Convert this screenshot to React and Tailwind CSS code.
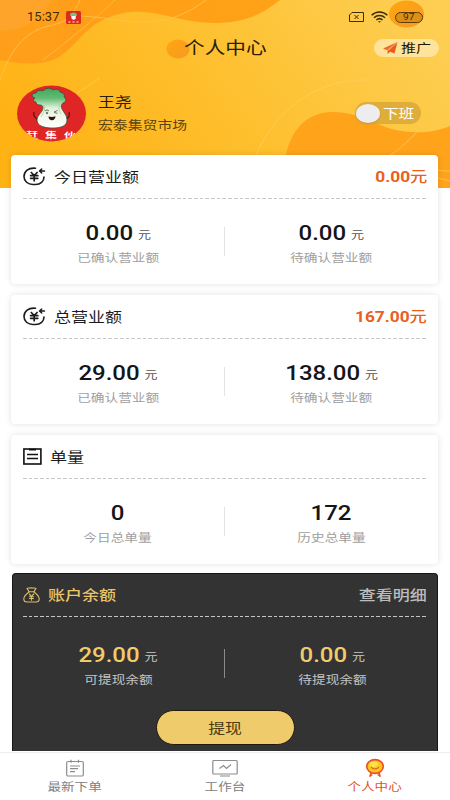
import React, { useState } from 'react';
import clsx from 'clsx';

const stats = [
  {
    title: '今日营业额',
    icon: 'yen',
    total: '0.00元',
    items: [
      { value: '0.00', unit: '元', label: '已确认营业额' },
      { value: '0.00', unit: '元', label: '待确认营业额' },
    ],
  },
  {
    title: '总营业额',
    icon: 'yen',
    total: '167.00元',
    items: [
      { value: '29.00', unit: '元', label: '已确认营业额' },
      { value: '138.00', unit: '元', label: '待确认营业额' },
    ],
  },
  {
    title: '单量',
    icon: 'list',
    items: [
      { value: '0', label: '今日总单量' },
      { value: '172', label: '历史总单量' },
    ],
  },
];

const balance = [
  { value: '29.00', unit: '元', label: '可提现余额' },
  { value: '0.00', unit: '元', label: '待提现余额' },
];

const Wide = ({ className, children }) => (
  <span className={clsx('inline-block whitespace-nowrap scale-x-[1.2]', className)}>{children}</span>
);

const YenIcon = () => (
  <svg width="23" height="19" viewBox="0 0 23 19" fill="none" stroke="#1c1c1c" strokeWidth="1.6" strokeLinecap="round">
    <path d="M12.500 1.200C5.500.4 1 4.500 1 9.500c0 4.600 3.800 8 9 8h2.500c5 0 8.500-3.200 8.500-7.500" />
    <path d="M21.500 4h-4.500M18.700 2L16.500 4l2.200 2" strokeLinejoin="round" strokeWidth="1.500" />
    <path d="M8.300 5.500l2.900 3 2.900-3M11.200 8.500v5.300M7.600 8.700h7.200M7.600 11.300h7.200" strokeWidth="1.700" />
  </svg>
);

const ListIcon = () => (
  <svg width="19" height="17" viewBox="0 0 19 17" fill="none" stroke="#111" strokeWidth="1.600">
    <rect x=".9" y="1" width="17" height="15" />
    <path d="M6 1.700h7M4 6.500h11M4 10.500h11" strokeWidth="1.700" />
  </svg>
);

const MoneyBagIcon = () => (
  <svg width="17" height="16" viewBox="0 0 17 16" fill="none" stroke="#d9bc6c" strokeWidth="1.100" strokeLinejoin="round" strokeLinecap="round">
    <path d="M6 4.500L4 1.400c1.500-1 2.500.2 4.500-.6 2 .8 3-.4 4.500.6L11 4.500M5.500 4.700h6" />
    <path d="M6 5C3.500 6.800.8 9 .8 12c0 2 1.200 3 3.200 3h9c2 0 3.200-1 3.200-3 0-3-2.700-5.200-5.200-7" />
    <path d="M6.300 7l2.200 2.300L10.700 7M8.500 9.300v4M6.500 9.800h4M6.500 11.500h4" />
  </svg>
);

const CabbageLogo = ({ className }) => (
  <svg className={className} viewBox="0 0 69 57" preserveAspectRatio="none">
    <defs>
      <clipPath id="avatarClip">
        <ellipse cx="34.500" cy="28.500" rx="34.500" ry="28" />
      </clipPath>
      <linearGradient id="leaf" x1="0" y1="0" x2="0" y2="1">
        <stop offset="0" stopColor="#3fa95c" />
        <stop offset=".25" stopColor="#62bb75" />
        <stop offset=".5" stopColor="#e4f2dc" />
        <stop offset="1" stopColor="#fff" />
      </linearGradient>
    </defs>
    <ellipse cx="34.500" cy="28.500" rx="34.500" ry="28" fill="#df2525" />
    <path d="M21 35c-3-2-5-5-4-8M49 34c3-1 4-4 3-7" fill="none" stroke="#4b1512" strokeWidth="1.200" />
    <path
      d="M23 20c-2 0-4-1-4-3-3 0-3-3-1-4-4-1-4-5 1-5 1-3 5-3 7-2 3-4 8-3 10-1 4-2 7 0 7 2 4 1 5 3 4 5 3 2 2 5-1 6-2 2-2 4-1 6 2 4 5 6 5 11 0 6-6 8-14 8-9 0-16-2-16-8 0-5 6-8 6-12 0-2-1-3-3-3z"
      fill="url(#leaf)"
      stroke="#35523a"
      strokeWidth=".8"
    />
    <path d="M27 20c2 5-1 8-3 12M43 19c-2 3-1 7 1 10" fill="none" stroke="#a9c9a4" strokeWidth=".8" />
    <path d="M28 26c1-1.300 3-1.300 4 0M37 27l3.500-1.500M37 27.500l3.500.8" fill="none" stroke="#4b4b42" strokeWidth=".8" />
    <circle cx="30" cy="28" r="1.200" fill="#777" />
    <path d="M31.500 31.500c2 .7 5 .7 7-.2 0 2.200-1.500 4-3.500 4s-3.500-1.700-3.500-3.800z" fill="#3a0d0d" />
    <g clipPath="url(#avatarClip)" fill="#fff" fontSize="8" fontWeight="700" fontFamily="Noto Sans CJK SC, sans-serif">
      <text transform="translate(9 52.500) scale(1.5 1)">赶</text>
      <text transform="translate(28 52.500) scale(1.5 1)">集</text>
      <text transform="translate(47 52.500) scale(1.5 1)">伙</text>
    </g>
  </svg>
);

const HeaderBackground = () => (
  <svg className="absolute inset-0 h-full w-full" viewBox="0 0 450 188" preserveAspectRatio="none">
    <defs>
      <linearGradient id="base" x1="0" y1=".6" x2="1" y2=".3">
        <stop offset="0" stopColor="#ffb214" />
        <stop offset=".5" stopColor="#fec02f" />
        <stop offset="1" stopColor="#fdce52" />
      </linearGradient>
      <linearGradient id="wave" x1="0" y1="0" x2="1" y2="0">
        <stop offset="0" stopColor="#ff9e1a" />
        <stop offset="1" stopColor="#ffa216" />
      </linearGradient>
      <linearGradient id="ball" x1="0" y1="0" x2="1" y2="1">
        <stop offset="0" stopColor="#ffa60f" />
        <stop offset="1" stopColor="#f79a24" />
      </linearGradient>
    </defs>
    <rect width="450" height="188" fill="url(#base)" />
    <path d="M0 60c18 4 35 5 50 1 22-7 31-31 53-41 14-7 27-9 40-8 25 2 44 11 70 11 32 0 48-8 67-23H0z" fill="url(#wave)" />
    <path d="M0 31c15 0 27-5 38-13 7-6 9-12 14-18H0z" fill="#ffa836" opacity=".6" />
    <path d="M286 188v-33c4-20 17-43 47-43 22 0 36 9 55 16 24 7 45 5 62-2v62z" fill="#ffa31b" />
    <g fill="none" stroke="#ffc24a" strokeWidth="1">
      <path d="M0 81C7 58 20 34 45 27c20-5 25-6 35-27" opacity=".9" />
      <path d="M43 60C65 43 92 22 115 0" opacity=".7" />
      <path d="M80 16c25 1 35 5 60 6 27 1 47-8 66-22" opacity=".9" />
      <path d="M74 95l26-17" stroke="#ffca45" />
      <path d="M256 155c15-35 52-77 112-75" stroke="#ffd05c" opacity=".7" />
      <path d="M386 158c12-7 20-15 31-26M438 170c4 1 8 1 12 1M438 178c4 1 8 2 12 3" />
    </g>
    <ellipse cx="178" cy="49" rx="11.500" ry="9.500" fill="url(#ball)" />
    <ellipse cx="406.500" cy="14" rx="17.500" ry="13.500" fill="url(#ball)" />
  </svg>
);

const StatusBar = () => (
  <div className="relative flex h-[34px] items-center pr-[27px] pl-[27px] text-[#3d2c08]">
    <span className="inline-block origin-left scale-x-[1.07] text-[12px] leading-none tracking-[0.1px]">15:37</span>
    <svg className="ml-[9px]" width="15" height="13" viewBox="0 0 15 13">
      <rect width="15" height="13" rx="1.500" fill="#e0281f" />
      <path d="M4.500 4c0-2.500 6-2.500 6 0l-1 2c2 3-5 4-4 0z" fill="#fff" />
      <path d="M4 4c0-3.500 7-3.500 7 0L9.500 5h-4z" fill="#7cbf7c" />
      <path d="M2.500 11h2M6.500 11h2M10.500 11h2" stroke="#fff" />
    </svg>
    <div className="ml-auto flex items-center gap-[7px]">
      <svg width="15" height="10" viewBox="0 0 15 10" fill="none" stroke="currentColor">
        <path d="M3 .5h11.500v9H.5V3zM5.500 3l4 4M9.500 3l-4 4" />
      </svg>
      <svg width="17" height="12" viewBox="0 0 17 12" fill="none" stroke="currentColor" strokeWidth="1.500">
        <path d="M.6 4.300c4.500-4.400 11.300-4.400 15.800 0M3 6.700c3.200-3 7.800-3 11 0M5.400 9c1.900-1.700 4.300-1.700 6.200 0" />
        <path d="M7 10.200h3l-1.500 1.500z" fill="currentColor" stroke="none" />
      </svg>
      <span className="flex h-[11px] w-[28px] items-center justify-center rounded-full border border-[#5b3b08] bg-[#c9830d]/60 text-[8.500px] leading-none">
        <Wide>97</Wide>
      </span>
    </div>
  </div>
);

const Header = ({ working, onToggle }) => (
  <header className="relative h-[155px] shrink-0">
    <div className="absolute inset-x-0 top-0 h-[188px]">
      <HeaderBackground />
    </div>
    <StatusBar />
    <div className="relative flex h-[28px] items-center justify-center pt-px">
      <h1 className="text-[17.200px] leading-none text-[#2b1d05]"><Wide>个人中心</Wide></h1>
      <button className="absolute top-[5px] right-[11px] flex h-[18px] w-[65px] items-center rounded-full bg-[#ffe39a] pl-[9px]">
        <svg width="15" height="12" viewBox="0 0 15 12">
          <path d="M14.500 0L0 6.500l4 1.800z" fill="#f0692a" />
          <path d="M14.500 0L4.500 8.500V12l2.500-2.300 4.500 1.800z" fill="#e95c1c" />
          <path d="M14.500 0L5.500 8.500" stroke="#ffc58a" strokeWidth=".6" />
        </svg>
        <Wide className="mt-[2px] ml-[3px] origin-left text-[12.500px] leading-none text-[#1f1706]">推广</Wide>
      </button>
    </div>
    <div className="relative flex pt-[23px] pl-[17px]">
      <CabbageLogo className="h-[57px] w-[69px]" />
      <div className="ml-[12px] flex flex-col pt-[8px]">
        <Wide className="origin-left text-[14px] leading-[18px] text-[#2b1d05]">王尧</Wide>
        <Wide className="mt-[7px] origin-left text-[12.400px] leading-[16px] text-[#5a430f]">宏泰集贸市场</Wide>
      </div>
      <button onClick={onToggle} className="mt-[17px] mr-[29px] ml-auto flex h-[22px] w-[66px] items-center rounded-full bg-[#dfae3a]">
        <span className="ml-[1px] h-[19px] w-[24px] rounded-[50%] bg-[#eeecee] shadow" />
        <Wide className="ml-[3px] origin-left text-[13px] leading-none text-white">{working ? '上班' : '下班'}</Wide>
      </button>
    </div>
  </header>
);

const Figures = ({ items, dark }) => (
  <div className="relative -mx-[12px] grid grid-cols-2 text-center">
    {items.map((item) => (
      <div key={item.label} className="flex flex-col items-center">
        <Wide className={clsx('h-[24px] text-[20px] leading-[24px] font-medium', dark ? 'text-[#f0cb6b]' : 'text-[#151515]')}>
          {item.value}
          {item.unit && (
            <span className={clsx('relative -top-px ml-[4px] text-[10.800px] leading-none font-normal', dark ? 'text-[#c9c9c9]' : 'text-[#555]')}>{item.unit}</span>
          )}
        </Wide>
        <Wide className={clsx('mt-[5px] text-[11.400px] leading-[16px]', dark ? 'text-[#c4c4c4]' : 'text-[#a0a0a0]')}>{item.label}</Wide>
      </div>
    ))}
    <span className={clsx('absolute top-[6px] right-1/2 h-[29px] w-px', dark ? 'bg-[#8a8a8a]' : 'bg-[#e4e4e4]')} />
  </div>
);

const StatCard = ({ card }) => (
  <section className="relative h-[129px] rounded-[4px] bg-white px-[12px] shadow-[0_0_6px_rgba(0,0,0,0.12)]">
    <div className="flex h-[43px] items-center">
      {card.icon === 'yen' ? <YenIcon /> : <ListIcon />}
      <Wide className="mt-px ml-[7.5px] origin-left text-[14.200px] leading-none text-[#1c1c1c]">{card.title}</Wide>
      {card.total && (
        <Wide className="mt-[3px] -mr-px ml-auto origin-right text-[14.400px] leading-none font-bold text-[#e8601c]">
          {card.total.replace('元', '')}
          <span className="font-medium">元</span>
        </Wide>
      )}
    </div>
    <div className="mb-[22px] h-px bg-[repeating-linear-gradient(90deg,#c8c8c8_0_3.7px,transparent_3.7px_5.7px)]" />
    <Figures items={card.items} />
  </section>
);

const BalanceCard = () => (
  <section className="flex h-[178px] flex-col rounded-t-[4px] border border-b-0 border-[#161616] bg-[#333] px-[10px]">
    <div className="flex h-[42px] items-center">
      <MoneyBagIcon />
      <Wide className="ml-[8px] origin-left text-[14.200px] leading-none font-medium text-[#e9c568]">账户余额</Wide>
      <Wide className="ml-auto origin-right text-[14.200px] leading-none font-medium text-[#bcbcbc]">查看明细</Wide>
    </div>
    <div className="mb-[26px] h-px bg-[repeating-linear-gradient(90deg,#c4c4c4_0_3.7px,transparent_3.7px_5.7px)]" />
    <Figures items={balance} dark />
    <button className="mx-auto mt-[22px] h-[35px] w-[139px] shrink-0 rounded-full border border-[#1f1a0d] bg-[#f0cb6b] text-[14px] leading-none text-[#4a3a12]">
      <Wide>提现</Wide>
    </button>
  </section>
);

const OrdersIcon = () => (
  <svg width="18" height="18" viewBox="0 0 18 18" fill="none" stroke="#8c8c8c" strokeWidth="1.200">
    <rect x=".7" y="2.500" width="16.600" height="14.500" rx="1.300" />
    <path d="M5 .8v3M12.500 .8v3M4 7h10M4 9.700h8M4 12.700h5" />
  </svg>
);

const WorkbenchIcon = () => (
  <svg width="26" height="18" viewBox="0 0 26 18" fill="none" stroke="#8c8c8c" strokeWidth="1.200">
    <rect x=".8" y="1.500" width="24.400" height="13.500" rx="1" />
    <path d="M8 17h10M7.500 9.500l4-3 3 3 4.500-4" />
  </svg>
);

const ProfileIcon = () => (
  <svg width="20" height="20" viewBox="0 0 20 20" fill="none">
    <path d="M6.500 14L4.800 18.800M13.500 14l1.700 4.800" stroke="#e5542b" strokeWidth="1.800" />
    <path d="M5 17.500l2.500-.7M15 17.500l-2.500-.7" stroke="#e5542b" strokeWidth="1.200" />
    <ellipse cx="10" cy="8.500" rx="8.300" ry="6.900" fill="#ffc51b" stroke="#e9502a" strokeWidth="1.600" />
    <ellipse cx="8.500" cy="6.200" rx="4.500" ry="2.700" fill="#ffe14a" />
    <path d="M6.500 9.300c1.200 2 5.800 2 7 0" stroke="#e5642b" strokeWidth="1.300" strokeLinecap="round" />
  </svg>
);

const tabs = [
  { label: '最新下单', Icon: OrdersIcon },
  { label: '工作台', Icon: WorkbenchIcon },
  { label: '个人中心', Icon: ProfileIcon },
];

const App = () => {
  const [working, setWorking] = useState(false);
  const [active, setActive] = useState('个人中心');

  return (
    <div className="flex h-[800px] w-[450px] flex-col overflow-hidden bg-white font-[Roboto,'Noto_Sans_CJK_SC',sans-serif]">
      <Header working={working} onToggle={() => setWorking(!working)} />
      <main className="relative flex flex-1 flex-col gap-[11px] pr-[12px] pl-[11px]">
        {stats.map((card) => (
          <StatCard key={card.title} card={card} />
        ))}
        <div className="-mt-[2px] ml-px">
          <BalanceCard />
        </div>
      </main>
      <nav className="relative grid h-[48px] shrink-0 grid-cols-3 border-t border-[#eee] bg-white">
        {tabs.map(({ label, Icon }) => (
          <button key={label} onClick={() => setActive(label)} className="flex flex-col items-center pt-[5px]">
            <span className="flex h-[20px] items-center"><Icon /></span>
            <Wide className={clsx('mt-[3px] text-[11.300px] leading-[14px]', active === label ? 'text-[#e0561f]' : 'text-[#808080]')}>{label}</Wide>
          </button>
        ))}
      </nav>
    </div>
  );
};

export default App;
